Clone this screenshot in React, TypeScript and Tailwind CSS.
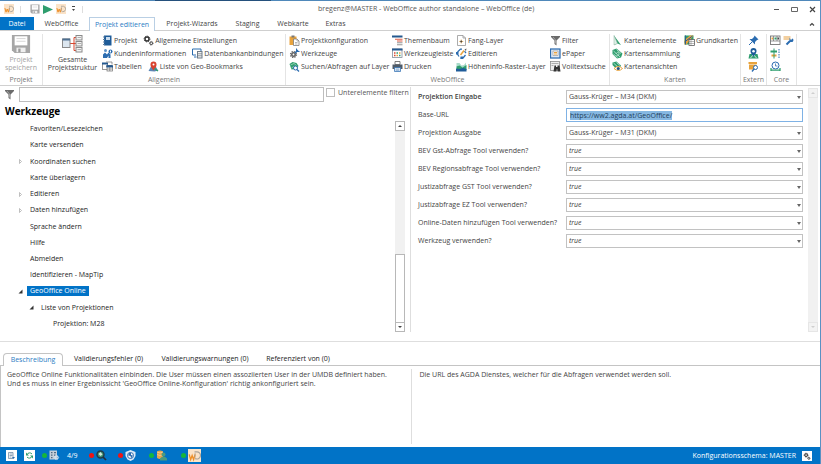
import { useEffect, useRef, type ReactNode } from "react";

const BLUE = "#2b6cb0";
const GREEN = "#2f9e6e";
const ORANGE = "#e8a33d";

function Svg({ children, className = "size-[11px]", box = 22 }: { children: ReactNode; className?: string; box?: number }) {
  return (
    <svg viewBox={`0 0 ${box} ${box}`} className={`${className} shrink-0`} fill="none" aria-hidden="true">
      {children}
    </svg>
  );
}

function Logo({ className = "size-[10px]" }: { className?: string }) {
  return (
    <Svg className={className}>
      <rect width="22" height="22" fill="#fbe3c8" />
      <path d="M2 9l2.500 9 2.500-7 2.500 7 2.500-9" stroke="#ee8f28" strokeWidth="2.200" />
      <path d="M11 5h3a6 6 0 1 1-2 11" stroke="#a9a39b" strokeWidth="2" />
      <path d="M12 7v8" stroke="#a9a39b" strokeWidth="1.500" />
    </Svg>
  );
}

function Floppy({ className }: { className: string }) {
  return (
    <Svg className={className}>
      <path d="M1 1h20v20H4l-3-3z" fill="#a6a6a6" />
      <path d="M4 2.500h14v10H4z" fill="#fff" />
      <path d="M6 5h10M6 8h10" stroke="#d4d4d4" />
      <path d="M6 15h10v5H6z" fill="#efefef" />
      <path d="M8 16h2.500v4H8z" fill="#9a9a9a" />
    </Svg>
  );
}

function Funnel({ className = "size-[11px]" }: { className?: string }) {
  return (
    <Svg className={className}>
      <path d="M2 2h18v2l-7 7v10l-4-3v-7L2 4z" fill="#6b6b6b" />
      <path d="M6 4l5 6v7" stroke="#b5b5b5" strokeWidth="1.500" />
    </Svg>
  );
}

function StructureIcon() {
  return (
    <svg viewBox="0 0 42 36" className="h-[18px] w-[21px]" fill="none" aria-hidden="true">
      <path d="M16 17h8M24 5v26M24 5h4M24 31h4M24 17h4" stroke="#d9472f" strokeWidth="2" />
      <rect x="1" y="8" width="15" height="17" fill="#dce6ef" stroke="#8a8a8a" strokeWidth="2" />
      <path d="M1 9h15" stroke="#4d6f91" strokeWidth="4" />
      {[1, 13, 25].map((y) => (
        <g key={y}>
          <rect x="28" y={y} width="12" height="9" fill="#f4f4f4" stroke="#8a8a8a" strokeWidth="2" />
          <path d={`M31 ${y + 4}h7`} stroke="#b0b0b0" strokeWidth="2" />
        </g>
      ))}
    </svg>
  );
}

function Gear({ x, y, r, fill }: { x: number; y: number; r: number; fill: string }) {
  return (
    <g>
      <circle cx={x} cy={y} r={r} stroke={fill} strokeWidth={r * 0.7} />
      <circle cx={x} cy={y} r={r * 1.450} stroke={fill} strokeWidth={r * 0.5} strokeDasharray={`${r * 0.62} ${r * 0.52}`} />
    </g>
  );
}

const icons = {
  book: (
    <Svg>
      <path d="M4 1h15v20H4z" fill="#1f5c99" />
      <path d="M8 4h8v6H8z" fill="#c9dcee" />
      <path d="M2 4h4M2 9h4M2 14h4M2 19h4" stroke="#5f7f9f" strokeWidth="2" />
    </Svg>
  ),
  gears: (
    <Svg>
      <Gear x={8} y={8} r={4} fill="#333" />
      <Gear x={16.500} y={16.500} r={2.600} fill="#333" />
    </Svg>
  ),
  customer: (
    <Svg>
      <path d="M2 20v-7l4-4 4 4 3-4 4 4v7h-4v-5l-3 5z" fill={BLUE} />
      <circle cx="7" cy="5" r="3" fill="#5d93c9" />
      <circle cx="17" cy="7" r="4" fill={BLUE} />
      <path d="M17 5v4" stroke="#fff" strokeWidth="2" />
    </Svg>
  ),
  database: (
    <Svg>
      <path d="M1 2h17v4M1 2v12h7" stroke={BLUE} strokeWidth="2" />
      <path d="M4 18h5" stroke={BLUE} strokeWidth="2" />
      <rect x="11" y="7" width="9" height="13" fill="#f2f2f2" stroke="#6f7b87" strokeWidth="2" />
      <path d="M11 11.500h9M11 15.500h9" stroke="#6f7b87" strokeWidth="1.500" />
    </Svg>
  ),
  tables: (
    <Svg>
      <rect x="1" y="5" width="10" height="12" fill="#fff" stroke="#777" strokeWidth="1.500" />
      <path d="M0 5h12M9 10h12" stroke="#24598f" strokeWidth="4" />
      <rect x="10" y="10" width="11" height="10" fill="#fff" stroke="#777" strokeWidth="1.500" />
      <path d="M9 11h13" stroke="#24598f" strokeWidth="4" />
      <path d="M10 16h11M15.500 12v8M8 2h12v5" stroke="#777" strokeWidth="1.500" />
    </Svg>
  ),
  bookmark: (
    <Svg>
      <path d="M1 20l5-9 5 2 4-3 5 9-7 2z" fill="#5a86b5" />
      <path d="M11 19C6 13 5 10 5 7a6 6 0 0 1 12 0c0 3-1 6-6 12z" fill="#d9432f" />
      <circle cx="11" cy="7" r="2" fill="#fff" />
      <path d="M13 15l7 5" stroke={GREEN} strokeWidth="3" />
    </Svg>
  ),
  clipboard: (
    <Svg>
      <path d="M1 3h14v17H1z" fill={ORANGE} />
      <path d="M5 1h6v4H5z" fill="#777" />
      <path d="M9 8h7l4 4v9H9z" fill="#fff" stroke="#777" strokeWidth="1.500" />
      <path d="M16 8v4h4M12 15h5M12 18h5" stroke="#888" strokeWidth="1.200" />
    </Svg>
  ),
  tool: (
    <Svg>
      <circle cx="9" cy="13" r="5" fill="#666" />
      <circle cx="9" cy="13" r="6" stroke="#666" strokeWidth="2.500" strokeDasharray="2.700 2" />
      <circle cx="9" cy="13" r="1.800" fill="#fff" />
      <path d="M12 10l6-6" stroke={BLUE} strokeWidth="3" />
      <path d="M15 1v6h6" stroke={BLUE} strokeWidth="2" />
    </Svg>
  ),
  searchLayer: (
    <Svg>
      <path d="M1 6l6-4 8 2 4 6-5 6-9 1z" fill={GREEN} />
      <path d="M3 8l7-3 5 4M5 14l6-4" stroke="#bfe5d3" strokeWidth="1.300" />
      <circle cx="13" cy="14" r="4" fill="#fff" stroke={BLUE} strokeWidth="2" />
      <path d="M16 17l4 4" stroke={BLUE} strokeWidth="2.500" />
    </Svg>
  ),
  tree: (
    <Svg>
      <path d="M0 3h21" stroke="#24598f" strokeWidth="4" />
      <path d="M6 8.500h15M10 12h11" stroke="#d9472f" strokeWidth="1.800" />
      <path d="M10 15.500h11M10 19.500h11" stroke="#888" strokeWidth="1.800" />
    </Svg>
  ),
  toolbar: (
    <Svg>
      <rect x="1" y="2" width="19" height="17" fill="#fff" stroke="#7c8794" strokeWidth="1.500" />
      <path d="M0 3h21" stroke="#24598f" strokeWidth="4" />
      <path d="M4 10h3M4 15h3" stroke="#d9472f" strokeWidth="3" />
      <path d="M9 10h3M14 15h3" stroke={GREEN} strokeWidth="3" />
      <path d="M14 10h3M9 15h3" stroke={ORANGE} strokeWidth="3" />
    </Svg>
  ),
  printer: (
    <Svg>
      <path d="M6 1h10v6H6z" fill="#fff" stroke="#555" strokeWidth="1.500" />
      <path d="M1 7h20v9H1z" fill="#4f5b68" />
      <path d="M5 13h12v8H5z" fill="#fff" stroke={BLUE} strokeWidth="1.500" />
      <path d="M7 16h8M7 18.500h8" stroke={BLUE} strokeWidth="1.200" />
    </Svg>
  ),
  snap: (
    <Svg>
      <path d="M3 1h11l5 5v15H3z" fill="#fff" stroke="#909090" strokeWidth="1.500" />
      <path d="M14 1v5h5" stroke="#909090" strokeWidth="1.500" />
      <path d="M10.500 9v8M6.500 13h8" stroke={ORANGE} strokeWidth="1.500" />
      <circle cx="10.500" cy="13" r="2" fill="#444" />
    </Svg>
  ),
  edit: (
    <Svg>
      <path d="M3 8l6-6h3M2 11l4 6M9 20h5l5-6M20 10l-3-4" stroke={BLUE} strokeWidth="2.500" />
      <path d="M9 14l7-9" stroke={ORANGE} strokeWidth="3" />
      <path d="M0 8h5v5H0zM9 17h5v5H9z" fill={BLUE} />
      <path d="M17 3l4-2-1 5z" fill="#555" />
    </Svg>
  ),
  height: (
    <Svg>
      <path d="M1 4h6l4 5 5-1 4-5v10H1z" fill="#a9dac9" />
      <path d="M1 11l6-2 6 4 8-5v10H1z" fill={GREEN} />
      <path d="M0 15l7 1 7-2 7 2v5H0z" fill="#1f5c99" />
    </Svg>
  ),
  epaper: (
    <Svg>
      <rect x="1" y="2" width="19" height="18" fill="#dfeaf5" stroke={BLUE} strokeWidth="2.500" />
      <rect x="6" y="6" width="10" height="9" fill="#fff" stroke="#777" />
      <path d="M8 9h6M8 12h6" stroke={ORANGE} strokeWidth="2" />
    </Svg>
  ),
  fulltext: (
    <Svg>
      <rect x="1" y="1" width="18" height="18" fill="#eee" stroke="#888" strokeWidth="1.500" />
      <path d="M3 5h14M3 9h4" stroke="#999" strokeWidth="1.500" />
      <path d="M9 9h3v3h3V9h4l2 12h-6v-4h-2v4H7z" fill="#333" />
    </Svg>
  ),
  north: (
    <Svg>
      <path d="M4 1l14 19-7-3-7 3z" fill={GREEN} />
      <path d="M4 1v19l7-3z" fill="#e1efe8" stroke="#8db7a3" />
    </Svg>
  ),
  mapStack: (
    <Svg>
      <path d="M1 4l8-3 12 10-3 8-8 2L1 12z" fill={GREEN} />
      <path d="M3 6l13 12M9 3l9 8M3 12l8 7M8 12c2-5 6-4 6 0s-3 4-5 3" stroke="#d3eee1" strokeWidth="1.500" />
    </Svg>
  ),
  mapEye: (
    <Svg>
      <path d="M1 3l8-2 9 8-4 8-6-2-7-7z" fill={GREEN} />
      <path d="M3 4l11 10M9 3l7 6" stroke="#d3eee1" strokeWidth="1.500" />
      <path d="M4 15q8-8 17 0-8 8-17 0z" fill="#fff" stroke={ORANGE} strokeWidth="2" />
      <circle cx="12.500" cy="15" r="3" fill="#244f7d" />
    </Svg>
  ),
  baseMap: (
    <Svg>
      <rect x="1" y="1" width="18" height="18" fill={GREEN} />
      <path d="M1 10L12 1h7L5 19H1z" fill={ORANGE} />
      <path d="M3 1v18M1 14L17 2" stroke="#315f8d" strokeWidth="2" />
      <rect x="10" y="9" width="11" height="12" fill="#fff" stroke="#555" strokeWidth="1.500" />
      <path d="M10 13h11M10 17h11M14 9v12" stroke="#777" />
    </Svg>
  ),
  pin: (
    <Svg>
      <path d="M13 1l8 8-3 1-4 4v5L3 8h5l4-4z" fill={BLUE} />
      <path d="M8 14l-6 6" stroke={BLUE} strokeWidth="2" />
    </Svg>
  ),
  place: (
    <Svg>
      <path d="M3 12h16l2 9H1z" fill={GREEN} />
      <path d="M5 20l6-7 6 7" stroke="#fff" strokeWidth="1.500" />
      <path d="M11 17C6 11 5 9 5 6a6 6 0 0 1 12 0c0 3-1 5-6 11z" fill="#1f5c99" />
      <circle cx="11" cy="6.500" r="2.500" fill="#fff" />
    </Svg>
  ),
  boxSearch: (
    <Svg>
      <path d="M1 2h17v4H1zM2 7h15v10H2z" fill={ORANGE} />
      <circle cx="15" cy="13" r="4" fill="#fff" stroke={BLUE} strokeWidth="2" />
      <path d="M12 16l-4 5" stroke={BLUE} strokeWidth="2.500" />
    </Svg>
  ),
  layout: (
    <Svg>
      <rect x="1" y="2" width="19" height="17" fill="#fff" stroke="#777" strokeWidth="1.800" />
      <path d="M1 12h19M7 2v10M14 2v10" stroke="#777" strokeWidth="1.500" />
      <path d="M3 5h3v4H3z" fill={ORANGE} />
      <path d="M9 5h4v4H9z" fill={GREEN} />
      <path d="M15 5h3v4h-3z" fill="#444" />
    </Svg>
  ),
  wrench: (
    <Svg>
      <path d="M1 2h14v8H1z" fill="#f2cf9f" />
      <path d="M7 19l7-7" stroke={BLUE} strokeWidth="4" />
      <path d="M13 5v9h6c3-3 2-6 0-7l-3 3-1-1z" fill={BLUE} />
    </Svg>
  ),
  align: (
    <Svg>
      <path d="M1 5h13v4H1z" fill={GREEN} />
      <path d="M3 13h10v4H3z" fill={ORANGE} />
      <path d="M8 1v20" stroke={GREEN} strokeWidth="2" />
      <path d="M18 2v18" stroke={BLUE} strokeWidth="2" strokeDasharray="3 2" />
    </Svg>
  ),
  clock: (
    <Svg>
      <circle cx="11" cy="9" r="7" fill="#fff" stroke={BLUE} strokeWidth="2" />
      <path d="M11 5v5h4" stroke={BLUE} strokeWidth="1.500" />
      <path d="M2 14v6M20 14v6M2 18h18" stroke={GREEN} strokeWidth="2.500" />
    </Svg>
  ),
};

type IconName = keyof typeof icons | "funnel";

function Tool({ icon, children }: { icon: IconName; children: string }) {
  return (
    <button type="button" className="flex h-[13px] items-center gap-px whitespace-nowrap">
      {icon === "funnel" ? <Funnel /> : icons[icon]}
      <span>{children}</span>
    </button>
  );
}

function IconTool({ icon, label }: { icon: keyof typeof icons; label: string }) {
  return (
    <button type="button" aria-label={label} className="flex h-[13px] items-center">
      {icons[icon]}
    </button>
  );
}

function Group({ title, className, children }: { title: string; className: string; children: ReactNode }) {
  return (
    <section className={`flex shrink-0 flex-col border-r border-[#e4e4e4] ${className}`}>
      <div className="flex flex-1 items-start">{children}</div>
      <h2 className="text-center leading-[10px] text-[#777]">{title}</h2>
    </section>
  );
}

const webOffice: [IconName, string][][] = [
  [["clipboard", "Projektkonfiguration"], ["tool", "Werkzeuge"], ["searchLayer", "Suchen/Abfragen auf Layer"]],
  [["tree", "Themenbaum"], ["toolbar", "Werkzeugleiste"], ["printer", "Drucken"]],
  [["snap", "Fang-Layer"], ["edit", "Editieren"], ["height", "Höheninfo-Raster-Layer"]],
  [["funnel", "Filter"], ["epaper", "ePaper"], ["fulltext", "Volltextsuche"]],
];

function Ribbon() {
  return (
    <div className="flex h-[55px] shrink-0 border-b border-[#d0d0d0] pt-[3px]">
      <Group title="Projekt" className="w-[43px]">
        <button type="button" disabled className="flex w-full flex-col items-center text-[#a3a3a3]">
          <Floppy className="size-[20px]" />
          <span className="mt-[2px] leading-[8px]">
            Projekt
            <br />
            speichern
          </span>
        </button>
      </Group>
      <Group title="Allgemein" className="w-[243px]">
        <button type="button" className="flex w-[59px] flex-col items-center pt-px">
          <StructureIcon />
          <span className="mt-[3px] leading-[8px]">
            Gesamte
            <br />
            Projektstruktur
          </span>
        </button>
        <div className="flex flex-col">
          <div className="flex gap-[6px]">
            <Tool icon="book">Projekt</Tool>
            <Tool icon="gears">Allgemeine Einstellungen</Tool>
          </div>
          <div className="flex gap-[6px]">
            <Tool icon="customer">Kundeninformationen</Tool>
            <Tool icon="database">Datenbankanbindungen</Tool>
          </div>
          <div className="flex gap-[6px]">
            <Tool icon="tables">Tabellen</Tool>
            <Tool icon="bookmark">Liste von Geo-Bookmarks</Tool>
          </div>
        </div>
      </Group>
      <Group title="WebOffice" className="w-[324px]">
        <div className="grid grid-cols-[103px_64px_94px_58px] pl-[3px]">
          {webOffice.map((column, i) => (
            <div key={i} className="flex flex-col items-start">
              {column.map(([icon, text]) => (
                <Tool key={text} icon={icon}>{text}</Tool>
              ))}
            </div>
          ))}
        </div>
      </Group>
      <Group title="Karten" className="w-[131px]">
        <div className="flex w-[74px] flex-col items-start pl-[2px]">
          <Tool icon="north">Kartenelemente</Tool>
          <Tool icon="mapStack">Kartensammlung</Tool>
          <Tool icon="mapEye">Kartenansichten</Tool>
        </div>
        <Tool icon="baseMap">Grundkarten</Tool>
      </Group>
      <Group title="Extern" className="w-[26px]">
        <div className="flex flex-1 flex-col items-center">
          <IconTool icon="pin" label="Anheften" />
          <IconTool icon="place" label="Ort" />
          <IconTool icon="boxSearch" label="Paket suchen" />
        </div>
      </Group>
      <Group title="Core" className="w-[30px]">
        <div className="grid grid-cols-2 gap-x-[2px] pl-[3px]">
          <IconTool icon="layout" label="Layout" />
          <IconTool icon="wrench" label="Wartung" />
          <IconTool icon="align" label="Ausrichten" />
          <span />
          <IconTool icon="clock" label="Zeitplan" />
        </div>
      </Group>
    </div>
  );
}

function TitleBar() {
  return (
    <header className="flex h-[16px] shrink-0 items-center">
      <div className="flex w-[318px] items-center pl-[4px]">
        <Logo />
        <span className="ml-[6px] h-[7px] w-px bg-[#ddd]" />
        <button type="button" aria-label="Speichern" className="ml-[9px]">
          <Floppy className="size-[10px]" />
        </button>
        <button type="button" aria-label="Starten" className="ml-[3px]">
          <svg viewBox="0 0 10 9" className="h-[9px] w-[10px]" aria-hidden="true">
            <path d="M0 0l10 4.500L0 9z" fill="#2f9e6e" />
          </svg>
        </button>
        <span className="ml-[3px]">
          <Logo />
        </span>
        <button type="button" aria-label="Symbolleiste anpassen" className="ml-[5px]">
          <svg viewBox="0 0 5 6" className="h-[6px] w-[5px]" aria-hidden="true">
            <path d="M1 0h3v1H1zM1 3h3L2.500 5z" fill="#444" />
          </svg>
        </button>
        <span className="ml-[6px] h-[7px] w-px bg-[#ddd]" />
      </div>
      <h1 className="whitespace-nowrap text-[#555]">bregenz@MASTER - WebOffice author standalone – WebOffice (de)</h1>
      <div className="flex flex-1 items-center justify-end gap-[11px] pr-[4px]">
        <button type="button" aria-label="Minimieren">
          <svg viewBox="0 0 7 7" className="size-[7px]" aria-hidden="true">
            <path d="M1 3.500h5" stroke="#555" />
          </svg>
        </button>
        <button type="button" aria-label="Maximieren">
          <svg viewBox="0 0 7 7" className="size-[7px]" aria-hidden="true">
            <path d="M.5 1.500h6v4h-6z" fill="none" stroke="#666" />
          </svg>
        </button>
        <button type="button" aria-label="Schließen">
          <svg viewBox="0 0 7 7" className="size-[7px]" aria-hidden="true">
            <path d="M1 1l5 5M6 1L1 6" stroke="#444" strokeWidth="1.200" />
          </svg>
        </button>
      </div>
    </header>
  );
}

function RibbonTabs() {
  return (
    <nav className="flex h-[14px] shrink-0 items-stretch border-b border-[#cfcfcf]">
      <button type="button" className="w-[34px] bg-[#0173c7] text-white">Datei</button>
      <button type="button" className="w-[55px]">WebOffice</button>
      <button type="button" className="-mb-px w-[66px] border border-b-0 border-[#b9cfe4] bg-white text-[#2b7cc4]">
        Projekt editieren
      </button>
      <button type="button" className="w-[74px]">Projekt-Wizards</button>
      <button type="button" className="w-[37px]">Staging</button>
      <button type="button" className="w-[54px]">Webkarte</button>
      <button type="button" className="w-[31px]">Extras</button>
      <button type="button" aria-label="Menüband minimieren" className="ml-auto mr-[5px]">
        <svg viewBox="0 0 6 4" className="h-[4px] w-[6px]" aria-hidden="true">
          <path d="M1 3.500l2-2 2 2" fill="none" stroke="#444" strokeWidth="1.200" />
        </svg>
      </button>
    </nav>
  );
}

const treeNodes: { text: string; level: number; state?: "open" | "closed"; selected?: boolean }[] = [
  { text: "Favoriten/Lesezeichen", level: 0 },
  { text: "Karte versenden", level: 0 },
  { text: "Koordinaten suchen", level: 0, state: "closed" },
  { text: "Karte überlagern", level: 0 },
  { text: "Editieren", level: 0, state: "closed" },
  { text: "Daten hinzufügen", level: 0, state: "closed" },
  { text: "Sprache ändern", level: 0 },
  { text: "Hilfe", level: 0 },
  { text: "Abmelden", level: 0 },
  { text: "Identifizieren - MapTip", level: 0 },
  { text: "GeoOffice Online", level: 0, state: "open", selected: true },
  { text: "Liste von Projektionen", level: 1, state: "open" },
  { text: "Projektion: M28", level: 2 },
];

const indents = ["pl-[17px]", "pl-[28px]", "pl-[40px]"];

function ScrollButton({ down = false, dim = false, label }: { down?: boolean; dim?: boolean; label: string }) {
  return (
    <button
      type="button"
      aria-label={label}
      className={`flex size-[10px] shrink-0 items-center justify-center border ${dim ? "border-[#e6e6e6] bg-[#f3f3f3]" : "border-[#b8b8b8] bg-white"}`}
    >
      <svg viewBox="0 0 4 2" className="h-[2px] w-[4px]" aria-hidden="true">
        <path d={down ? "M0 0h4L2 2z" : "M0 2h4L2 0z"} fill={dim ? "#cfcfcf" : "#444"} />
      </svg>
    </button>
  );
}

function TreePanel() {
  return (
    <section className="flex w-1/2 flex-col">
      <div className="flex h-[15px] items-start">
        <span className="flex w-[19px] justify-center pt-[2px]">
          <Funnel />
        </span>
        <input
          type="text"
          aria-label="Filter"
          className="h-[15px] min-w-0 flex-1 border border-[#bdbdbd] bg-white px-1 outline-none"
        />
        <label className="flex w-[86px] items-center gap-[3px] pl-[2px] pt-px text-[#555]">
          <input type="checkbox" className="size-[9px] shrink-0 appearance-none border border-[#bdbdbd] bg-white" />
          <span className="whitespace-nowrap leading-[9px]">Unterelemente filtern</span>
        </label>
      </div>
      <h2 className="pl-[5px] pt-px text-[10px] font-bold leading-[16px] text-black">Werkzeuge</h2>
      <div className="mt-[2px] flex flex-1 pr-[5px]">
        <ul className="flex flex-1 flex-col text-[#1c1c1c]">
          {treeNodes.map((node) => (
            <li key={node.text} className={`flex flex-1 items-center ${indents[node.level]}`}>
              <span className="flex w-[10px] pl-px">
                {node.state && (
                  <svg viewBox="0 0 10 10" className="size-[5px]" aria-hidden="true">
                    {node.state === "open" ? (
                      <path d="M9 1v8H1z" fill="#333" />
                    ) : (
                      <path d="M3 1l4 4-4 4z" fill="#fff" stroke="#aaa" strokeWidth="1.500" />
                    )}
                  </svg>
                )}
              </span>
              <button type="button" className={`px-[3px] leading-[10px] ${node.selected ? "bg-[#0173c7] text-white" : ""}`}>
                {node.text}
              </button>
            </li>
          ))}
        </ul>
        <div className="flex w-[10px] flex-col bg-[#f1f1f1]">
          <ScrollButton label="Nach oben" />
          <div className="flex-[124]" />
          <div className="flex-[68] border border-b-0 border-[#b8b8b8] bg-white" />
          <ScrollButton down label="Nach unten" />
        </div>
      </div>
    </section>
  );
}

const fields: { id: string; label: string; value: string; kind: "plain" | "url" | "bool" }[] = [
  { id: "projIn", label: "Projektion Eingabe", value: "Gauss-Krüger – M34 (DKM)", kind: "plain" },
  { id: "baseUrl", label: "Base-URL", value: "https://ww2.agda.at/GeoOffice/", kind: "url" },
  { id: "projOut", label: "Projektion Ausgabe", value: "Gauss-Krüger – M31 (DKM)", kind: "plain" },
  { id: "bevGst", label: "BEV Gst-Abfrage Tool verwenden?", value: "true", kind: "bool" },
  { id: "bevReg", label: "BEV Regionsabfrage Tool verwenden?", value: "true", kind: "bool" },
  { id: "justGst", label: "Justizabfrage GST Tool verwenden?", value: "true", kind: "bool" },
  { id: "justEz", label: "Justizabfrage EZ Tool verwenden?", value: "true", kind: "bool" },
  { id: "online", label: "Online-Daten hinzufügen Tool verwenden?", value: "true", kind: "bool" },
  { id: "tool", label: "Werkzeug verwenden?", value: "true", kind: "bool" },
];

function FormPanel() {
  const urlRef = useRef<HTMLInputElement>(null);
  useEffect(() => {
    urlRef.current?.focus();
    urlRef.current?.select();
  }, []);
  return (
    <section className="flex flex-1 border-l border-[#dedede]">
      <form className="flex flex-1 flex-col gap-[4px] pl-[7px] pt-[3px]">
        {fields.map((field) => (
          <div key={field.id} className="flex h-[14px] items-center">
            <label
              htmlFor={field.id}
              className={`w-[148px] shrink-0 whitespace-nowrap ${field.id === "projIn" ? "font-semibold" : ""}`}
            >
              {field.label}
            </label>
            {field.kind === "url" ? (
              <input
                ref={urlRef}
                id={field.id}
                type="text"
                defaultValue={field.value}
                className="h-[14px] min-w-0 flex-1 border border-[#7fb2e5] bg-white px-[3px] text-[#333] outline-none selection:bg-[#86b8e2] selection:text-[#1f3f5c]"
              />
            ) : (
              <div className="relative flex h-[14px] flex-1">
                <select
                  id={field.id}
                  className={`w-full appearance-none border border-[#c2c2c2] bg-white px-[2px] leading-[10px] outline-none ${field.kind === "bool" ? "italic" : ""}`}
                >
                  <option>{field.value}</option>
                </select>
                <svg viewBox="0 0 4 3" className="pointer-events-none absolute right-[2px] top-[6px] h-[3px] w-[4px]" aria-hidden="true">
                  <path d="M0 0h4L2 3z" fill="#666" />
                </svg>
              </div>
            )}
          </div>
        ))}
      </form>
      <div className="ml-[5px] mr-[2px] mt-px flex w-[10px] flex-col bg-[#f1f1f1]">
        <ScrollButton dim label="Formular nach oben" />
        <div className="flex-1" />
        <ScrollButton dim down label="Formular nach unten" />
      </div>
    </section>
  );
}

function DetailPanel() {
  return (
    <section className="mt-[9px] flex h-[106px] shrink-0 flex-col border-t border-[#dedede] pt-[11px]">
      <div className="flex h-[13px] shrink-0 items-stretch border-b border-[#c4c4c4] pl-[3px] text-[#222]">
        <button type="button" className="-mb-px w-[60px] rounded-t-sm border border-b-0 border-[#c4c4c4] bg-white text-[#2b7cc4]">
          Beschreibung
        </button>
        <button type="button" className="w-[91px]">Validierungsfehler (0)</button>
        <button type="button" className="w-[102px]">Validierungswarnungen (0)</button>
        <button type="button" className="w-[84px]">Referenziert von (0)</button>
      </div>
      <div className="flex flex-1 border-l border-[#c4c4c4] leading-[9px]">
        <p className="w-1/2 pl-[6px] pt-[4px]">
          GeoOffice Online Funktionalitäten einbinden. Die User müssen einen assoziierten User in der UMDB definiert haben.
          <br />
          Und es muss in einer Ergebnissicht 'GeoOffice Online-Konfiguration' richtig ankonfiguriert sein.
        </p>
        <p className="my-[3px] flex-1 border-l border-[#dedede] pl-[8px] pt-px">
          Die URL des AGDA Dienstes, welcher für die Abfragen verwendet werden soll.
        </p>
      </div>
    </section>
  );
}

function Dot({ red = false }: { red?: boolean }) {
  return <span className={`size-[5px] shrink-0 rounded-full ${red ? "bg-[#f01414]" : "bg-[#16b53c]"}`} />;
}

function StatusBar() {
  return (
    <footer className="flex h-[17px] shrink-0 items-center bg-[#0173c7] pl-[6px] pr-[8px] text-white">
      <button type="button" aria-label="Protokoll">
        <Svg>
          <rect width="22" height="22" fill="#fff" />
          <path d="M5 5h9v12H5zM7 8h6M7 11h6M7 14h4" stroke="#6e87a0" strokeWidth="1.500" />
          <path d="M12 14h6l-3 4z" fill={BLUE} />
        </Svg>
      </button>
      <button type="button" aria-label="Aktualisieren" className="ml-[7px]">
        <Svg>
          <rect width="22" height="22" fill="#fff" />
          <path d="M16 8a6 6 0 0 0-10 1M6 14a6 6 0 0 0 10-1" stroke={GREEN} strokeWidth="2" />
          <path d="M4 5v6h6zM18 17v-6h-6z" fill={GREEN} />
        </Svg>
      </button>
      <div className="ml-[7px] flex w-[47px] items-center gap-[2px]">
        <Dot />
        <Svg>
          <rect x="1" y="1" width="15" height="18" fill="#c6d0da" />
          <path d="M4 5h3M4 10h3M4 15h3M10 5h4M10 10h3" stroke="#526b84" strokeWidth="2.500" />
          <Gear x={15} y={15} r={3} fill="#d7e3ee" />
        </Svg>
        <span className="ml-[5px]">4/9</span>
      </div>
      <div className="flex w-[29px] items-center gap-[2px]">
        <Dot red />
        <Svg>
          <circle cx="9" cy="9" r="7" fill="#3f916f" stroke="#203c4d" strokeWidth="3" />
          <path d="M5 8l4-4 4 5-4 3z" fill="#d3e8dd" />
          <path d="M14 14l6 6" stroke="#203040" strokeWidth="3.500" />
        </Svg>
      </div>
      <div className="flex w-[31px] items-center gap-[2px]">
        <Dot red />
        <Svg>
          <path d="M11 0l10 4v8l-4 7-6 3-6-3-4-7V4z" fill="#dcebf8" />
          <circle cx="11" cy="11" r="6" fill="#fff" stroke={BLUE} strokeWidth="2" />
          <path d="M9 5l-3 6 5 1 1 5 4-6-4-1V6z" fill={BLUE} />
        </Svg>
      </div>
      <div className="flex w-[32px] items-center gap-[2px]">
        <Dot />
        <Svg>
          <path d="M2 3q6-4 12 0v13q-6 4-12 0z" fill="#e5a44d" />
          <path d="M2 4q6 4 12 0M2 9q6 4 12 0" stroke="#f9d9a8" strokeWidth="1.300" />
          <circle cx="15" cy="9" r="4" fill="#4d9a7d" />
          <path d="M8 21v-4q7-8 14 0v4z" fill="#4d9a7d" />
        </Svg>
      </div>
      <div className="flex items-center gap-[2px]">
        <Dot />
        <Logo className="size-[13px]" />
      </div>
      <span className="ml-auto">Konfigurationsschema: MASTER</span>
      <button type="button" aria-label="Schema einstellen" className="ml-[6px]">
        <Svg className="size-[10px]">
          <rect width="22" height="22" fill="#fff" />
          <Gear x={9} y={9} r={3} fill="#222" />
          <Gear x={15} y={16} r={2} fill="#222" />
        </Svg>
      </button>
    </footer>
  );
}

export default function App() {
  return (
    <div className="flex h-screen flex-col border-r border-[#5a91c3] bg-white font-['Open_Sans','Noto_Sans',sans-serif] text-[7px] leading-[10px] text-[#444]">
      <div className="flex h-px shrink-0 bg-[#4f88ba] pl-[155px]">
        <span className="w-[116px] bg-[#24507c]" />
      </div>
      <TitleBar />
      <RibbonTabs />
      <Ribbon />
      <main className="mt-px flex min-h-0 flex-1">
        <TreePanel />
        <FormPanel />
      </main>
      <DetailPanel />
      <StatusBar />
    </div>
  );
}
